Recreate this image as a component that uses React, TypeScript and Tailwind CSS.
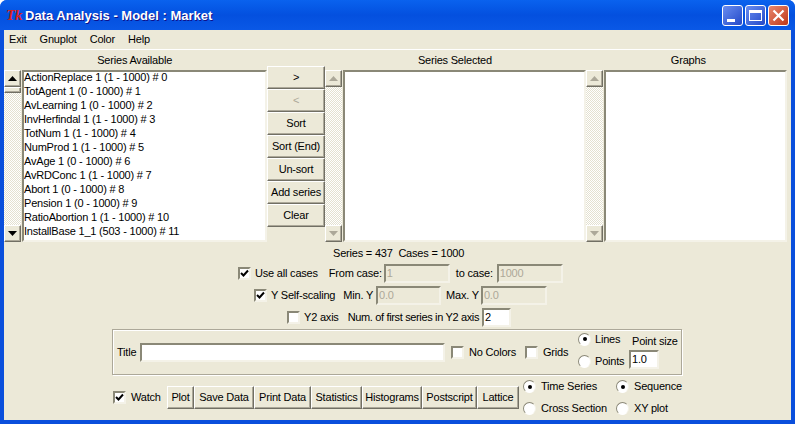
import type { ReactNode } from "react";

const raised =
  "border border-t-white border-l-white border-r-[#716f64] border-b-[#716f64] shadow-[inset_-1px_-1px_0_#aca899] bg-[#ece9d8]";
const sunken =
  "border-2 border-t-[#8a8877] border-l-[#8a8877] border-r-[#f4f2e8] border-b-[#f4f2e8]";
const track =
  "bg-[repeating-conic-gradient(#ffffff_0_25%,#e4e1d0_0_50%)] bg-[length:2px_2px]";

const series = [
  "ActionReplace 1 (1 - 1000) # 0",
  "TotAgent 1 (0 - 1000) # 1",
  "AvLearning 1 (0 - 1000) # 2",
  "InvHerfindal 1 (1 - 1000) # 3",
  "TotNum 1 (1 - 1000) # 4",
  "NumProd 1 (1 - 1000) # 5",
  "AvAge 1 (0 - 1000) # 6",
  "AvRDConc 1 (1 - 1000) # 7",
  "Abort 1 (0 - 1000) # 8",
  "Pension 1 (0 - 1000) # 9",
  "RatioAbortion 1 (1 - 1000) # 10",
  "InstallBase 1_1 (503 - 1000) # 11",
];

const sideButtons = ["Sort", "Sort (End)", "Un-sort", "Add series", "Clear"];

const plotButtons = [
  { label: "Plot", width: "w-[27px]" },
  { label: "Save Data", width: "w-[60px]" },
  { label: "Print Data", width: "w-[57px]" },
  { label: "Statistics", width: "w-[51px]" },
  { label: "Histograms", width: "w-[60px]" },
  { label: "Postscript", width: "w-[55px]" },
  { label: "Lattice", width: "w-[42px]" },
];

const Arrow = ({ up, muted }: { up?: boolean; muted?: boolean }) => (
  <svg width="9" height="5" viewBox="0 0 9 5">
    <path
      d={up ? "M4.5 0 L9 5 L0 5 Z" : "M0 0 L9 0 L4.5 5 Z"}
      fill={muted ? "#aca899" : "#000000"}
    />
  </svg>
);

const Scrollbar = ({ active }: { active?: boolean }) => (
  <div className={`flex h-[172px] w-[17px] shrink-0 flex-col ${track}`}>
    <div className={`flex h-[17px] items-center justify-center ${raised}`}>
      <Arrow up muted={!active} />
    </div>
    {active && <div className={`h-[6px] ${raised}`} />}
    <div className="flex-1" />
    <div className={`flex h-[17px] items-center justify-center ${raised}`}>
      <Arrow muted={!active} />
    </div>
  </div>
);

const Check = ({ checked }: { checked?: boolean }) => (
  <div className={`flex h-[13px] w-[13px] shrink-0 items-center justify-center bg-white ${sunken}`}>
    {checked && (
      <svg width="9" height="9" viewBox="0 0 9 9">
        <path d="M1 4 L3.5 6.5 L8 1.5" fill="none" stroke="#000000" strokeWidth="2" />
      </svg>
    )}
  </div>
);

const Radio = ({ on }: { on?: boolean }) => (
  <div className="flex h-[13px] w-[13px] shrink-0 items-center justify-center rounded-full border border-t-[#8a8877] border-l-[#8a8877] border-r-[#f4f2e8] border-b-white bg-white">
    {on && <div className="h-[4px] w-[4px] rounded-full bg-black" />}
  </div>
);

const Field = ({
  className,
  value,
  disabled,
}: {
  className: string;
  value?: string;
  disabled?: boolean;
}) => (
  <div
    className={`flex shrink-0 items-center pl-px ${sunken} ${className} ${
      disabled ? "bg-[#ece9d8] text-[#aca899]" : "bg-white text-black"
    }`}
  >
    {value}
  </div>
);

const Column = ({ title, className }: { title: string; className: string }) => (
  <div className={`text-center ${className}`}>{title}</div>
);

const ListBox = ({ className, children }: { className: string; children?: ReactNode }) => (
  <div className={`h-[172px] shrink-0 overflow-hidden bg-white ${sunken} ${className}`}>{children}</div>
);

export default function App() {
  return (
    <div className="flex h-[424px] w-[795px] flex-col overflow-hidden rounded-t-[7px] bg-[#0a4fdc] font-['Liberation_Sans',sans-serif] text-[11px] leading-none tracking-[-0.2px] text-black">
      <div className="flex h-[30px] shrink-0 items-center bg-gradient-to-b from-[#0a62ee] via-[#0450df] to-[#0a58e6] pl-[6px] pr-[6px]">
        <span className="w-[19px] font-['Liberation_Serif',serif] text-[15px] font-bold italic text-[#d92020]">
          Tk
        </span>
        <span className="text-[13px] font-bold tracking-normal text-white [text-shadow:1px_1px_0_#0f1089]">
          Data Analysis - Model : Market
        </span>
        <div className="ml-auto flex gap-[2px]">
          <div className="flex h-[21px] w-[21px] items-end rounded-[3px] border border-white bg-gradient-to-br from-[#6a8cf0] to-[#2448c8] pb-[3px] pl-[4px]">
            <div className="h-[3px] w-[8px] bg-white" />
          </div>
          <div className="flex h-[21px] w-[21px] items-center justify-center rounded-[3px] border border-white bg-gradient-to-br from-[#6a8cf0] to-[#2448c8]">
            <div className="h-[11px] w-[13px] border border-t-[3px] border-white" />
          </div>
          <div className="flex h-[21px] w-[21px] items-center justify-center rounded-[3px] border border-white bg-gradient-to-br from-[#e8866c] to-[#bf3512]">
            <svg width="13" height="13" viewBox="0 0 13 13">
              <path d="M1.5 1.5 L11.5 11.5 M11.5 1.5 L1.5 11.5" stroke="#ffffff" strokeWidth="2.2" />
            </svg>
          </div>
        </div>
      </div>

      <div className="mx-[4px] mb-[4px] flex flex-1 flex-col bg-[#ece9d8]">
        <div className="flex h-[20px] shrink-0 items-center gap-[13px] border-b border-white pl-[5px]">
          <span>Exit</span>
          <span>Gnuplot</span>
          <span>Color</span>
          <span>Help</span>
        </div>

        <div className="flex h-[20px] items-center">
          <Column title="Series Available" className="w-[262px]" />
          <Column title="Series Selected" className="ml-[59px] w-[262px]" />
          <Column title="Graphs" className="w-[206px]" />
        </div>

        <div className="flex h-[177px] items-start">
          <Scrollbar active />
          <ListBox className="ml-px w-[245px]">
            <div className="-mt-[2px]">
              {series.map((s) => (
                <div key={s} className="flex h-[14px] items-center whitespace-nowrap">
                  {s}
                </div>
              ))}
            </div>
          </ListBox>
          <div className="-mt-[4px] flex w-[58px] shrink-0 flex-col">
            <div className={`flex h-[23px] items-center justify-center ${raised}`}>&gt;</div>
            <div className={`flex h-[23px] items-center justify-center text-[#aca899] ${raised}`}>
              &lt;
            </div>
            {sideButtons.map((b) => (
              <div key={b} className={`flex h-[23px] items-center justify-center ${raised}`}>
                {b}
              </div>
            ))}
          </div>
          <Scrollbar />
          <ListBox className="ml-px w-[243px]" />
          <Scrollbar />
          <ListBox className="ml-px w-[183px]" />
        </div>

        <div className="flex h-[13px] items-center pl-[329px]">Series = 437&nbsp;&nbsp;Cases = 1000</div>

        <div className="mt-[4px] flex h-[19px] items-center pl-[234px]">
          <Check checked />
          <span className="ml-[4px]">Use all cases</span>
          <span className="ml-[11px]">From case:</span>
          <Field className="ml-[2px] h-[19px] w-[66px]" value="1" disabled />
          <span className="ml-[6px]">to case:</span>
          <Field className="ml-[4px] h-[19px] w-[66px]" value="1000" disabled />
        </div>

        <div className="mt-[3px] flex h-[19px] items-center pl-[250px]">
          <Check checked />
          <span className="ml-[4px]">Y Self-scaling</span>
          <span className="ml-[8px]">Min. Y</span>
          <Field className="ml-[3px] h-[19px] w-[65px]" value="0.0" disabled />
          <span className="ml-[5px]">Max. Y</span>
          <Field className="ml-[2px] h-[19px] w-[66px]" value="0.0" disabled />
        </div>

        <div className="mt-[3px] flex h-[19px] items-center pl-[283px]">
          <Check />
          <span className="ml-[4px]">Y2 axis</span>
          <span className="ml-[9px] whitespace-nowrap tracking-[-0.35px]">Num. of first series in Y2 axis</span>
          <Field className="ml-[3px] h-[19px] w-[29px]" value="2" />
        </div>

        <div className="mt-[2px] ml-[108px] flex h-[46px] w-[570px] items-center border border-[#aca899] pl-[4px] shadow-[inset_1px_1px_0_#ffffff,1px_1px_0_#ffffff]">
          <span className="w-[19px]">Title</span>
          <Field className="ml-[4px] h-[19px] w-[305px]" />
          <div className="ml-[6px]">
            <Check />
          </div>
          <span className="ml-[5px] w-[46px] whitespace-nowrap">No Colors</span>
          <div className="ml-[10px]">
            <Check />
          </div>
          <span className="ml-[5px] w-[24px]">Grids</span>
          <div className="ml-[11px] mb-[4px] flex w-[47px] shrink-0 flex-col gap-[9px]">
            <div className="flex items-center gap-[4px]">
              <Radio on />
              <span>Lines</span>
            </div>
            <div className="flex items-center gap-[4px]">
              <Radio />
              <span>Points</span>
            </div>
          </div>
          <div className="ml-[4px] mt-[1px] flex flex-col gap-[3px]">
            <span className="whitespace-nowrap pl-[3px]">Point size</span>
            <Field className="h-[19px] w-[30px]" value="1.0" />
          </div>
        </div>

        <div className="ml-[109px] mt-[5px] flex items-center">
          <Check checked />
          <span className="ml-[5px] w-[32px]">Watch</span>
          <div className="ml-[4px] flex">
            {plotButtons.map((b) => (
              <div
                key={b.label}
                className={`flex h-[23px] items-center justify-center whitespace-nowrap ${b.width} ${raised}`}
              >
                {b.label}
              </div>
            ))}
          </div>
          <div className="ml-[4px] grid grid-cols-[93px_auto] gap-y-[9px]">
            <div className="flex items-center gap-[5px]">
              <Radio on />
              <span>Time Series</span>
            </div>
            <div className="flex items-center gap-[5px]">
              <Radio on />
              <span>Sequence</span>
            </div>
            <div className="flex items-center gap-[5px]">
              <Radio />
              <span className="whitespace-nowrap">Cross Section</span>
            </div>
            <div className="flex items-center gap-[5px]">
              <Radio />
              <span>XY plot</span>
            </div>
          </div>
        </div>
      </div>
    </div>
  );
}
